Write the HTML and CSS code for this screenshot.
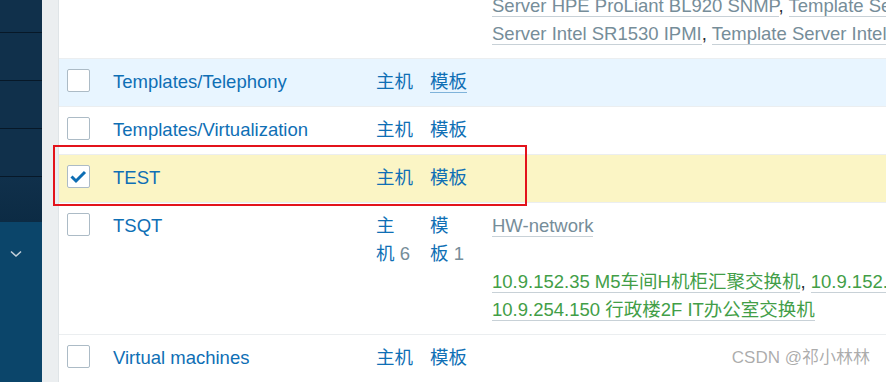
FILE: index.html
```html
<!DOCTYPE html>
<html lang="zh-CN">
<head>
    <meta charset="UTF-8">
    <meta name="viewport" content="width=device-width, initial-scale=1.0">
    <title>主机群组</title>
    <link rel="stylesheet" href="styles.css">
</head>
<body>

    <div class="page">
        <!-- Sidebar -->
        <nav class="sidebar">
            <div class="nav-group">
                <div class="nav-item nav-item-top"></div>
                <div class="nav-item"></div>
                <div class="nav-item"></div>
                <div class="nav-item"></div>
                <div class="nav-item nav-item-last"></div>
            </div>
            <div class="nav-sub">
                <svg class="chevron" width="12" height="8" viewBox="0 0 12 8">
                    <polyline points="1,1.5 6,6 11,1.5" fill="none" stroke="#c3d0da" stroke-width="1.6"/>
                </svg>
            </div>
        </nav>

        <div class="gutter"></div>

        <!-- Host group list (scrolled, first row partly above the fold) -->
        <main class="content">
            <div class="list">

                <div class="row">
                    <div class="cell"></div>
                    <div class="cell"></div>
                    <div class="cell"></div>
                    <div class="cell"></div>
                    <div class="cell members">
                        <div class="line"></div>
                        <div class="line"><a class="tpl">Server HPE ProLiant BL920 SNMP</a>, <a class="tpl">Template Server HPE ProLiant DL360 SNMP</a></div>
                        <div class="line"><a class="tpl">Server Intel SR1530 IPMI</a>, <a class="tpl">Template Server Intel SR1630 IPMI</a></div>
                    </div>
                </div>

                <div class="row hover">
                    <div class="cell"><span class="checkbox"></span></div>
                    <div class="cell"><a class="name">Templates/Telephony</a></div>
                    <div class="cell"><a class="link">主机</a></div>
                    <div class="cell"><a class="link underlined">模板</a></div>
                    <div class="cell members"></div>
                </div>

                <div class="row">
                    <div class="cell"><span class="checkbox"></span></div>
                    <div class="cell"><a class="name">Templates/Virtualization</a></div>
                    <div class="cell"><a class="link">主机</a></div>
                    <div class="cell"><a class="link">模板</a></div>
                    <div class="cell members"></div>
                </div>

                <div class="row selected">
                    <div class="cell">
                        <span class="checkbox checked">
                            <svg width="23" height="23" viewBox="0 0 23 23">
                                <polyline points="4.5,11.5 9,16 18,7" fill="none" stroke="#0d6db3" stroke-width="3"/>
                            </svg>
                        </span>
                    </div>
                    <div class="cell"><a class="name">TEST</a></div>
                    <div class="cell"><a class="link">主机</a></div>
                    <div class="cell"><a class="link">模板</a></div>
                    <div class="cell members"></div>
                </div>

                <div class="row">
                    <div class="cell"><span class="checkbox"></span></div>
                    <div class="cell"><a class="name">TSQT</a></div>
                    <div class="cell narrow"><a class="link">主机</a>&nbsp;<span class="count">6</span></div>
                    <div class="cell narrow"><a class="link">模板</a>&nbsp;<span class="count">1</span></div>
                    <div class="cell members">
                        <div class="line"><a class="tpl">HW-network</a></div>
                        <div class="line"></div>
                        <div class="line"><a class="host">10.9.152.35 M5车间H机柜汇聚交换机</a>, <a class="host">10.9.152.36 M5车间G机柜交换机</a></div>
                        <div class="line"><a class="host">10.9.254.150 行政楼2F IT办公室交换机</a></div>
                    </div>
                </div>

                <div class="row">
                    <div class="cell"><span class="checkbox"></span></div>
                    <div class="cell"><a class="name">Virtual machines</a></div>
                    <div class="cell"><a class="link">主机</a></div>
                    <div class="cell"><a class="link">模板</a></div>
                    <div class="cell members"></div>
                </div>

            </div>
        </main>

        <div class="highlight"></div>
        <div class="watermark">CSDN @祁小林林</div>
    </div>

</body>
</html>
```

FILE: styles.css
```css
html, body {
    margin: 0;
    padding: 0;
    height: 100%;
    overflow: hidden;
}
body {
    font-family: "Liberation Sans", Arial, "Noto Sans CJK SC", sans-serif;
    font-size: 18.5px;
    line-height: 28px;
    color: #1f2c33;
    background: #ebeef0;
}
.page {
    position: relative;
    display: flex;
    height: 100vh;
}

/* Sidebar */
.sidebar {
    width: 42px;
    flex-shrink: 0;
    display: flex;
    flex-direction: column;
    background: #0b456a;
}
.nav-group {
    background: #10304b;
}
.nav-item {
    height: 47px;
    border-bottom: 1px solid #071828;
}
.nav-item-top {
    height: 32px;
}
.nav-item-last {
    height: 45px;
    border-bottom: none;
    background: linear-gradient(#10304b, #0c2b44);
}
.nav-sub {
    flex: 1;
    padding-top: 28px;
    padding-left: 10px;
}
.chevron {
    display: block;
}

.gutter {
    width: 16px;
    flex-shrink: 0;
    background: #ebeef0;
}

/* Content */
.content {
    flex: 1;
    min-width: 0;
    overflow: hidden;
    background: #ffffff;
    border-left: 1px solid #dfe4e7;
}
.list {
    margin-top: -45px;
}
.row {
    display: grid;
    grid-template-columns: 45px 263px 54px 62px 1fr;
    border-bottom: 1px solid #ebeef0;
}
.row.hover {
    background: #e8f5ff;
}
.row.selected {
    background: #fbf5c5;
}
.cell {
    padding: 9px 5px 10px 9px;
    min-width: 0;
}
.cell:first-child {
    padding-left: 8px;
}
.members {
    white-space: nowrap;
}
.line {
    height: 28px;
}

.checkbox {
    display: block;
    box-sizing: border-box;
    width: 23px;
    height: 23px;
    margin-top: 1px;
    background: #ffffff;
    border: 1px solid #acbbc6;
    border-radius: 2px;
}
.checkbox svg {
    display: block;
    margin: -1px 0 0 -1px;
}

a {
    text-decoration: none;
}
.name, .link {
    color: #0f6fb5;
}
.link.underlined {
    border-bottom: 1px solid #7fb3da;
}
.count {
    color: #768d99;
}
.tpl {
    color: #768d99;
    border-bottom: 1px solid #c8d1d7;
}
.host {
    color: #429e47;
    border-bottom: 1px solid #c8d1d7;
}

/* Annotation overlays */
.highlight {
    position: absolute;
    left: 53px;
    top: 145px;
    width: 474px;
    height: 61px;
    box-sizing: border-box;
    border: 2px solid #e3131b;
}
.watermark {
    position: absolute;
    right: 16px;
    bottom: 13px;
    font-size: 17px;
    line-height: 22px;
    color: rgba(90, 90, 90, 0.5);
}
```
